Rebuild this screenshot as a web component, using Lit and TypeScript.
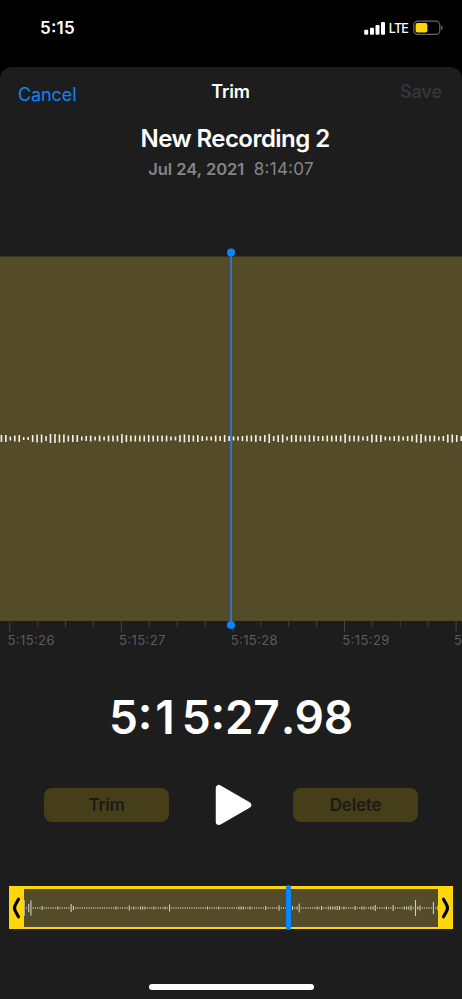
import { LitElement, html, css, svg } from "lit";
import { customElement } from "lit/decorators.js";

const WAVE = [
  7, 7, 4, 6, 7, 3, 3, 7, 8, 8, 5, 9, 9, 8, 8, 6, 7, 7, 4, 5, 6, 4, 6, 4, 6, 6, 6, 9, 7, 6, 6, 6, 6, 7, 6,
  6, 6, 6, 4, 4, 7, 8, 7, 6, 7, 5, 4, 4, 6, 5, 7, 5, 4, 4, 5, 6, 6, 7, 5, 7, 9, 5, 7, 8, 4, 7, 7, 6, 6,
  7, 6, 5, 5, 6, 6, 6, 6, 9, 6, 6, 6, 4, 5, 8, 7, 7, 4, 4, 5, 6, 4, 5, 6, 8, 9, 6, 6, 6, 4, 5, 8, 8, 7, 5,
];
const WAVE_STEP = 4.464;

// [x, height] of the louder moments in the overview
const PEAKS: [number, number][] = [
  [24.2, 16], [28.6, 8], [31, 15], [42, 4], [57.5, 3], [71, 8], [73.2, 4], [115.5, 3], [129, 5], [133.5, 3],
  [140, 3], [142.2, 3], [144.4, 3], [153.5, 3], [164.5, 3], [169, 7], [207, 3], [218, 3], [238, 3], [240.2, 3],
  [242.4, 3], [249.5, 3], [265, 4], [278.5, 5], [291.5, 4], [296, 3], [298.4, 9], [316, 3], [320.5, 4],
  [327.4, 3], [329.6, 3], [331.9, 3], [334, 3], [336.4, 4], [338.6, 4], [343, 3], [354.2, 4], [361, 3],
  [363.2, 3], [369.8, 3], [372, 3], [374.5, 6], [385.5, 3], [392.5, 6], [403.5, 3], [405.7, 3], [408, 3],
  [410, 5], [414.5, 16], [416.8, 3], [419, 5], [434.5, 12], [436.8, 5],
];
const MINI_STEP = 2.236;

function overview() {
  const heights: number[] = new Array(186).fill(1.3);
  for (const [x, h] of PEAKS) {
    const i = Math.round((x - 24.2) / MINI_STEP);
    if (i < heights.length) heights[i] = h;
  }
  return heights;
}

@customElement("app-root")
export class AppRoot extends LitElement {
  static styles = css`
    :host {
      display: flex;
      flex-direction: column;
      width: 462px;
      height: 999px;
      overflow: hidden;
      background: #000;
      color: #fff;
      font-family: Inter, "Liberation Sans", sans-serif;
      white-space: nowrap;
    }
    svg { display: block; }
    .status {
      height: 67px;
      box-sizing: border-box;
      padding: 17px 18px 0 40px;
      display: flex;
      justify-content: space-between;
      align-items: flex-start;
    }
    .clock { font-size: 17px; line-height: 22px; font-weight: 600; letter-spacing: 0.2px; font-feature-settings: "case" 1; }
    .signals { display: flex; align-items: center; height: 22px; }
    .lte { font-size: 12.5px; font-weight: 500; letter-spacing: -0.8px; margin: 0 5px 0 2.5px; }
    .sheet {
      flex: 1;
      display: flex;
      flex-direction: column;
      background: #1d1d1d;
      border-radius: 12px 12px 0 0;
    }
    .nav {
      height: 56px;
      display: grid;
      grid-template-columns: 1fr auto 1fr;
      padding: 0 20px 0 18px;
      font-size: 18px;
      line-height: 24px;
    }
    .cancel { color: #0a84ff; padding-top: 16px; letter-spacing: -0.1px; }
    .heading { font-weight: 600; padding: 13px 0 0 1px; letter-spacing: -0.2px; }
    .save { color: #353538; font-weight: 600; padding-top: 13px; text-align: right; letter-spacing: -0.1px; }
    .title { height: 32px; line-height: 32px; font-size: 24px; font-weight: 600; text-align: center; letter-spacing: -0.55px; padding-left: 8px; }
    .meta { height: 28px; line-height: 28px; font-size: 17px; color: #858587; text-align: center; }
    .date { font-weight: 600; margin-right: 9.5px; font-size: 16.5px; letter-spacing: 0; }
    .clocktime { letter-spacing: 0.25px; font-feature-settings: "case" 1; }
    .stage { margin-top: 73px; position: relative; height: 365px; background: linear-gradient(#393523 1px, #544c28 1px); }
    .bars { padding-top: 0.5px; }
    .playhead { position: absolute; left: 227px; top: -8px; }
    .ruler { height: 33px; }
    .ticks { height: 12px; }
    .labels { display: grid; grid-template-columns: repeat(5, 111.6px); padding-left: 7.5px; width: 454.5px; overflow: hidden; font-size: 13px; line-height: 15px; color: #5a5a5d; letter-spacing: 0.4px; font-feature-settings: "case" 1; }
    .time { height: 66px; line-height: 66px; margin-top: 30px; text-align: center; font-size: 46px; font-weight: 600; letter-spacing: -0.25px; font-feature-settings: "case" 1; }
    .one { margin: 0 7.5px 0 3px; }
    .point { margin-left: 1px; }
    .actions { margin-top: 30px; height: 50px; padding: 0 44px; display: flex; justify-content: space-between; align-items: center; }
    .pill { width: 125px; height: 34px; border-radius: 8px; background: #463e18; color: #1b1b1a; font-size: 17px; line-height: 34px; font-weight: 600; text-align: center; letter-spacing: -0.2px; }
    .play { margin-left: 5px; }
    .scrub { position: relative; margin: 56px 9px 0; height: 43px; display: flex; background: #ffd60a; }
    .handle { width: 15px; display: flex; align-items: center; justify-content: center; }
    .track { flex: 1; margin: 2.5px 0; background: #544c28; }
    .cursor { position: absolute; left: 277px; top: -1px; width: 5px; height: 45px; border-radius: 2.5px; background: #0a84ff; }
    .home { margin: 55px auto 0; width: 165px; height: 6px; border-radius: 3px; background: #fff; }
  `;

  render() {
    return html`
      <div class="status">
        <div class="clock">5:15</div>
        <div class="signals">
          <svg width="22" height="14" viewBox="0 0 22 14" fill="#fff">
            <rect x="0.2" y="8.8" width="4" height="5" rx="1" />
            <rect x="6" y="6.8" width="4" height="7" rx="1" />
            <rect x="11.5" y="4" width="4" height="9.8" rx="1" />
            <rect x="17" y="1" width="4" height="12.8" rx="1" />
          </svg>
          <span class="lte">LTE</span>
          <svg width="31" height="16" viewBox="0 0 31 16">
            <rect x="0.8" y="1.2" width="26" height="13.2" rx="4" fill="none" stroke="#68686a" stroke-width="1.2" />
            <rect x="2.6" y="3" width="11.8" height="9.6" rx="2" fill="#ffd60a" />
            <path d="M28.2 5.6Q29.8 6 29.8 7.8T28.2 10Z" fill="#68686a" />
          </svg>
        </div>
      </div>
      <div class="sheet">
        <div class="nav">
          <span class="cancel">Cancel</span>
          <span class="heading">Trim</span>
          <span class="save">Save</span>
        </div>
        <div class="title">New Recording 2</div>
        <div class="meta"><span class="date">Jul 24, 2021</span><span class="clocktime">8:14:07</span></div>
        <div class="stage">
          <svg class="bars" width="462" height="364" viewBox="0 0 462 364">
            ${WAVE.map((h, i) => svg`<rect x=${0.6 + i * WAVE_STEP} y=${182 - h / 2} width="1.6" height=${h} fill="#f4f2ec" />`)}
          </svg>
          <svg class="playhead" width="8" height="381" viewBox="0 0 8 381">
            <path d="M4 4V376" stroke="#2f7bd0" stroke-width="1.8" />
            <circle cx="4" cy="4.5" r="4" fill="#0a84ff" />
            <circle cx="4" cy="377" r="4" fill="#0a84ff" />
          </svg>
        </div>
        <div class="ruler">
          <svg class="ticks" width="462" height="12" viewBox="0 0 462 12">
            ${Array.from({ length: 17 }, (_, i) => svg`<rect x=${9.2 + i * 27.9} y="0" width="1" height=${i % 4 ? 6 : 11} fill="#414143" />`)}
          </svg>
          <div class="labels">
            ${[26, 27, 28, 29, 30].map((s) => html`<span>5:15:${s}</span>`)}
          </div>
        </div>
        <div class="time">5:<span class="one">1</span>5:27<span class="point">.</span>98</div>
        <div class="actions">
          <div class="pill">Trim</div>
          <svg class="play" width="38" height="42" viewBox="0 0 38 42">
            <path d="M4 4.2V37.8L33 21Z" fill="#fff" stroke="#fff" stroke-width="6.5" stroke-linejoin="round" />
          </svg>
          <div class="pill">Delete</div>
        </div>
        <div class="scrub">
          <div class="handle">
            <svg width="15" height="22" viewBox="0 0 15 22"><path d="M9.5 2.2L6.4 7.7Q4.6 11 6.4 14.3L9.5 19.8" fill="none" stroke="#000" stroke-width="3.1" stroke-linecap="round" /></svg>
          </div>
          <svg class="track" width="414" height="38" viewBox="24 0 414 38">
            ${overview().map((h, i) => svg`<rect x=${24.2 + i * MINI_STEP - 0.55} y=${19 - h / 2} width="1.1" height=${h} fill="#d0cdc0" />`)}
          </svg>
          <div class="handle">
            <svg width="15" height="22" viewBox="0 0 15 22"><path d="M5.5 2.2L8.6 7.7Q10.4 11 8.6 14.3L5.5 19.8" fill="none" stroke="#000" stroke-width="3.1" stroke-linecap="round" /></svg>
          </div>
          <div class="cursor"></div>
        </div>
        <div class="home"></div>
      </div>
    `;
  }
}
